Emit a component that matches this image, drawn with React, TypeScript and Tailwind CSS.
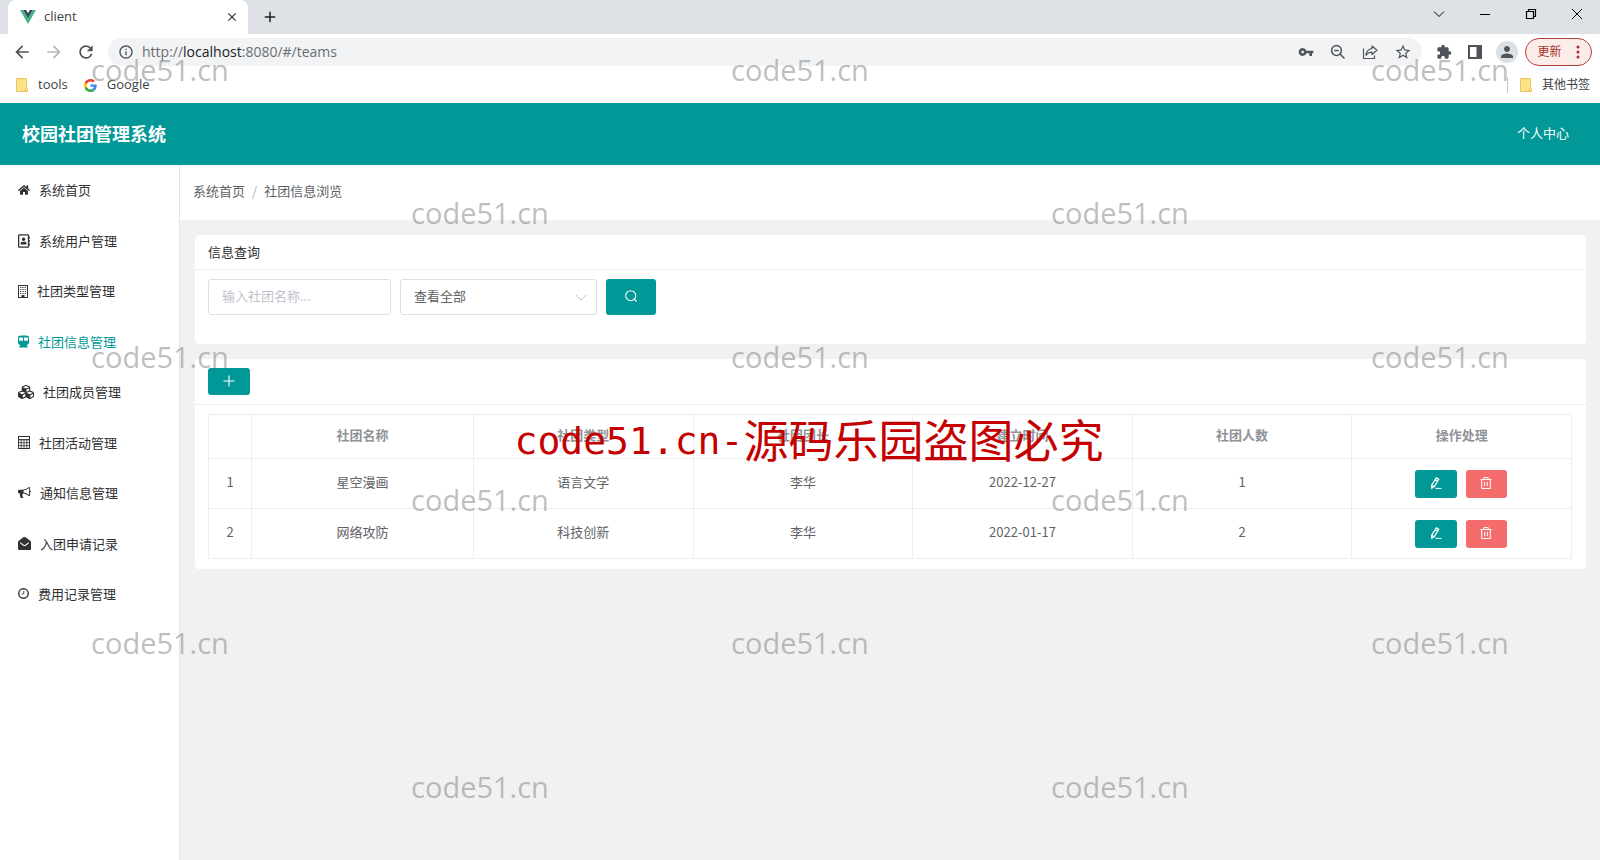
import React from "react";
import { FaHome, FaRegAddressBook, FaCubes } from "react-icons/fa";
import { MdOutlineInfo, MdVpnKey, MdStarOutline, MdExtension, MdPerson, MdRefresh, MdArrowBack, MdArrowForward, MdAdd, MdClose } from "react-icons/md";

type IconProps = { className?: string };

const VueLogo = () => (
  <svg viewBox="0 0 16 14" className="h-3.5 w-4" aria-hidden="true">
    <path d="M0 0h3.2L8 8.3 12.8 0H16L8 14z" fill="#41b883" />
    <path d="M3.2 0h3L8 3.2 9.8 0h3L8 8.3z" fill="#35495e" />
  </svg>
);

const GoogleLogo = () => (
  <svg viewBox="0 0 48 48" className="size-[13px]" aria-hidden="true">
    <path fill="#EA4335" d="M24 9.5c3.5 0 6.700 1.200 9.200 3.600l6.900-6.900C35.900 2.400 30.500 0 24 0 14.600 0 6.500 5.400 2.600 13.200l8 6.200C12.400 13.700 17.700 9.500 24 9.500z" />
    <path fill="#4285F4" d="M47 24.500c0-1.600-.2-3.100-.4-4.500H24v9h12.900c-.6 3-2.300 5.500-4.800 7.200l7.700 6C44.400 38 47 32.100 47 24.500z" />
    <path fill="#FBBC05" d="M10.500 28.600c-.5-1.500-.8-3-.8-4.600s.3-3.100.8-4.600l-8-6.200C.9 16.500 0 20.100 0 24s.9 7.500 2.600 10.800z" />
    <path fill="#34A853" d="M24 48c6.500 0 11.900-2.100 15.900-5.800l-7.700-6c-2.200 1.500-4.900 2.300-8.200 2.300-6.300 0-11.600-4.200-13.500-9.900l-8 6.200C6.500 42.600 14.600 48 24 48z" />
  </svg>
);

const FolderIcon = () => (
  <svg viewBox="0 0 12 14" className="h-3.5 w-3" aria-hidden="true">
    <path d="M.5.500h10v9l1 1v3H.5z" fill="#fde18b" stroke="#e8c659" />
    <path d="M9.500 13.500v-3l1-1" fill="none" stroke="#e8c659" />
  </svg>
);

const BuildingIcon = ({ className }: IconProps) => (
  <svg viewBox="0 0 10 13" className={className} aria-hidden="true">
    <rect x=".5" y=".5" width="9" height="12" fill="none" stroke="currentColor" />
    <path d="M2 2.500h6M2 4.500h6M2 6.500h6M2 8.500h6" stroke="currentColor" strokeWidth=".9" strokeDasharray="1 .67" />
    <path d="M3.500 10h3v3h-3z" fill="currentColor" />
  </svg>
);

const TrainIcon = ({ className }: IconProps) => (
  <svg viewBox="0 0 12 13" className={className} fill="currentColor" aria-hidden="true">
    <path fillRule="evenodd" d="M3 0h6Q12 0 12 2.300v5.900Q12 10 9.500 10.200L11 13H1l1.500-2.800Q0 10 0 8.200V2.300Q0 0 3 0zM1.200 2.200v3.600h4.200V2.200zM6.600 2.200v3.600h4.200V2.200z" />
  </svg>
);

const CalculatorIcon = ({ className }: IconProps) => (
  <svg viewBox="0 0 12 13" className={className} fill="none" stroke="currentColor" aria-hidden="true">
    <rect x=".5" y=".5" width="11" height="12" />
    <path d="M1 3.700h10" strokeWidth="1.200" />
    <path d="M1 6.700h10M1 9.700h10M3.200 4v8.500M6 4v8.500M8.800 4v8.500" strokeWidth=".8" />
  </svg>
);

const BullhornIcon = ({ className }: IconProps) => (
  <svg viewBox="0 0 1792 1792" className={className} fill="currentColor" aria-hidden="true">
    <path d="M1664 640q53 0 90.500 37.500t37.500 90.500-37.500 90.500-90.500 37.500v384q0 52-38 90t-90 38q-417-347-812-380-58 19-91 66t-31 100.500 40 92.500q-20 33-23 65.500t6 58 33.500 55 48 50 61.500 50.500q-29 58-111.500 83t-168.500 11.500-132-55.500q-7-23-29.500-87.500t-32-94.500-23-89-15-101 3.500-98.500 22-110.500h-122q-66 0-113-47t-47-113v-192q0-66 47-113t113-47h480q435 0 896-384 52 0 90 38t38 90v384zm-128 604v-954q-394 302-768 343v270q377 42 768 341z" />
  </svg>
);

const EnvelopeOpenIcon = ({ className }: IconProps) => (
  <svg viewBox="0 0 13 13" className={className} aria-hidden="true">
    <path d="M0 4.600Q3 2 5 .6q1.500-1 3 0Q10 2 13 4.600V12q0 1-1 1H1q-1 0-1-1z" fill="currentColor" />
    <path d="M2.300 5.600Q4 7.200 5.500 8.200q1 .6 2 0Q9 7.200 10.700 5.600" fill="none" stroke="#fff" strokeWidth="1.100" />
  </svg>
);

const ClockIcon = ({ className }: IconProps) => (
  <svg viewBox="0 0 12 12" className={className} fill="none" stroke="currentColor" aria-hidden="true">
    <circle cx="6" cy="6" r="5.200" strokeWidth="1.500" />
    <path d="M6.300 3.200v3.200H4" strokeWidth=".9" />
  </svg>
);

const EditIcon = () => (
  <svg viewBox="0 0 12 12" className="size-3" fill="none" stroke="currentColor" aria-hidden="true">
    <path d="M6.300.900l2.400 1.400-4.300 7.200-2.600 1.600-.1-3zM5.300 2.700l2.400 1.400M1.700 8.200l2.500 1.500" strokeWidth="1.300" />
    <path d="M5.500 11.400h6" />
  </svg>
);

const TrashIcon = () => (
  <svg viewBox="0 0 12 12" className="size-3" fill="none" stroke="currentColor" aria-hidden="true">
    <path d="M.5 2.500h11M3.800 2.500V.6h4.400v1.900M1.700 2.500v9h8.600v-9M4.700 4.800v4.400M7.300 4.800v4.400" />
  </svg>
);

const ShareIcon = () => (
  <svg viewBox="0 0 16 16" className="size-4" fill="none" stroke="currentColor" strokeWidth="1.200" aria-hidden="true">
    <path d="M1.500 4.500v10h11v-3" />
    <path d="M10 2l5 4.300-5 4.200V8.200C7 8.200 5.300 9.300 4 11.500c.3-4 2.600-6.600 6-7z" strokeLinejoin="round" />
  </svg>
);

const ZoomOutIcon = () => (
  <svg viewBox="0 0 16 16" className="size-4" fill="none" stroke="currentColor" strokeWidth="1.500" aria-hidden="true">
    <circle cx="6.500" cy="6.500" r="4.900" />
    <path d="M10 10l4.500 4.500M4.300 6.500h4.400" />
  </svg>
);

const menu = [
  { label: "系统首页", icon: <FaHome className="h-3 w-3" /> },
  { label: "系统用户管理", icon: <FaRegAddressBook className="h-3.5 w-3" /> },
  { label: "社团类型管理", icon: <BuildingIcon className="h-[13px] w-2.5" /> },
  { label: "社团信息管理", icon: <TrainIcon className="h-[13px] w-[11px]" />, active: true },
  { label: "社团成员管理", icon: <FaCubes className="h-4 w-4" /> },
  { label: "社团活动管理", icon: <CalculatorIcon className="h-[13px] w-3" /> },
  { label: "通知信息管理", icon: <BullhornIcon className="size-[13px]" /> },
  { label: "入团申请记录", icon: <EnvelopeOpenIcon className="size-[13px]" /> },
  { label: "费用记录管理", icon: <ClockIcon className="size-[11px]" /> },
];

const teams = [
  { id: 1, name: "星空漫画", type: "语言文学", leader: "李华", date: "2022-12-27", count: 1 },
  { id: 2, name: "网络攻防", type: "科技创新", leader: "李华", date: "2022-01-17", count: 2 },
];

const headings = ["", "社团名称", "社团类型", "社团团长", "建立时间", "社团人数", "操作处理"];

function Browser() {
  return (
    <div className="font-['Open_Sans','Noto_Sans_CJK_SC',sans-serif] text-[13px] text-[#3c4043]">
      <div className="flex h-[34px] items-stretch bg-[#dee1e6] pl-2">
        <div className="flex w-60 items-center rounded-t-lg bg-white pr-[9px] pl-3">
          <VueLogo />
          <span className="ml-2 flex-1">client</span>
          <button aria-label="关闭标签页" className="text-[#333]"><MdClose className="size-3.5" /></button>
        </div>
        <button aria-label="新标签页" className="ml-[13px] text-[#222]"><MdAdd className="size-[18px]" /></button>
        <div className="ml-auto flex items-start pt-2 pr-[17px] text-black">
          <div className="flex gap-[34px]">
            <button aria-label="搜索标签页">
              <svg viewBox="0 0 12 12" className="size-3" fill="none" stroke="currentColor"><path d="M1 3.500l5 5 5-5" /></svg>
            </button>
            <button aria-label="最小化">
              <svg viewBox="0 0 12 12" className="size-3" fill="none" stroke="currentColor"><path d="M1 6.500h10" /></svg>
            </button>
            <button aria-label="还原">
              <svg viewBox="0 0 12 12" className="size-3" fill="none" stroke="currentColor" strokeWidth="1.200"><path d="M1.500 3.500h7v7h-7zM3.500 3.500v-2h7v7h-2" /></svg>
            </button>
            <button aria-label="关闭">
              <svg viewBox="0 0 12 12" className="size-3" fill="none" stroke="currentColor"><path d="M1 1l10 10M11 1L1 11" /></svg>
            </button>
          </div>
        </div>
      </div>

      <div className="flex h-9 items-center bg-white pr-2 pl-3 text-[#50545a]">
        <button aria-label="后退"><MdArrowBack className="size-5" /></button>
        <button aria-label="前进" className="ml-3 text-[#b4b6b9]"><MdArrowForward className="size-5" /></button>
        <button aria-label="刷新" className="ml-3"><MdRefresh className="size-5" /></button>
        <div className="ml-3 flex h-7 flex-1 items-center rounded-full bg-[#f1f3f4] pr-2.5 pl-2.5">
          <MdOutlineInfo className="size-4" />
          <div role="textbox" aria-label="地址" contentEditable suppressContentEditableWarning className="ml-2 flex-1 text-sm text-[#6a6e73] outline-none">
            http://<span className="text-[#202124]">localhost</span>:8080/#/teams
          </div>
          <div className="flex items-center gap-4">
            <MdVpnKey className="size-4" />
            <ZoomOutIcon />
            <ShareIcon />
            <MdStarOutline className="size-[18px]" />
          </div>
        </div>
        <div className="ml-3.5 flex items-center">
          <MdExtension className="size-4" />
          <svg viewBox="0 0 14 14" className="ml-4 size-3.5" aria-hidden="true">
            <path d="M1 1h12v12H1z" fill="none" stroke="currentColor" strokeWidth="2" />
            <path d="M8.500 1H13v12H8.500z" fill="currentColor" />
          </svg>
          <span className="ml-3.5 flex size-[22px] items-center justify-center rounded-full bg-[#dbdfe6]">
            <MdPerson className="size-[18px]" />
          </span>
          <button className="ml-[7px] flex h-7 w-[67px] items-center justify-center gap-3.5 rounded-full border border-[#b3413a] bg-[#fbebe9] text-xs text-[#a8322a]">
            更新
            <svg viewBox="0 0 4 14" className="h-3.5 w-1" fill="currentColor" aria-hidden="true">
              <circle cx="2" cy="2" r="1.500" /><circle cx="2" cy="7" r="1.500" /><circle cx="2" cy="12" r="1.500" />
            </svg>
          </button>
        </div>
      </div>

      <div className="flex h-[33px] items-center bg-white pr-2.5 pb-[3px] pl-4">
        <a href="#/tools" className="flex items-center gap-2.5"><FolderIcon />tools</a>
        <a href="#/google" className="ml-4 flex items-center gap-2.5"><GoogleLogo />Google</a>
        <a href="#/bookmarks" className="ml-auto flex items-center gap-2.5 border-l border-[#c4c7cb] pl-3 text-xs"><FolderIcon />其他书签</a>
      </div>
    </div>
  );
}

function Sidebar() {
  return (
    <aside className="w-[180px] shrink-0 border-r border-[#e6e6e6] bg-white">
      <nav className="grid h-[454px] auto-rows-fr text-[#303133]">
        {menu.map((m) => (
          <a key={m.label} href="#/" className={m.active ? "flex items-center gap-[9px] pl-[18px] text-[#029898]" : "flex items-center gap-[9px] pl-[18px]"}>
            {m.icon}
            <span>{m.label}</span>
          </a>
        ))}
      </nav>
    </aside>
  );
}

function Search() {
  return (
    <section className="rounded-sm bg-white pb-[29px]">
      <h2 className="flex h-[35px] items-center border-b border-[#ebeef5] px-[13px] text-[#303133]">信息查询</h2>
      <form className="flex gap-[9px] px-[13px] pt-[9px]" onSubmit={(e) => e.preventDefault()}>
        <input aria-label="社团名称" placeholder="输入社团名称..." className="h-9 w-[183px] rounded-[3px] border border-[#dcdfe6] px-[13px] pb-[3px] outline-none placeholder:text-[#bfc3cc]" />
        <div className="relative">
          <select aria-label="社团类型" className="h-9 w-[197px] appearance-none rounded-[3px] border border-[#dcdfe6] bg-white px-[13px] pb-[3px] text-[#606266] outline-none">
            <option>查看全部</option>
          </select>
          <svg viewBox="0 0 12 12" className="pointer-events-none absolute top-3 right-2.5 size-3 text-[#c0c4cc]" fill="none" stroke="currentColor" aria-hidden="true">
            <path d="M1 4l5 5 5-5" />
          </svg>
        </div>
        <button aria-label="搜索" className="flex h-9 w-[50px] items-center justify-center rounded-[3px] bg-[#029898] pb-0.5 text-white">
          <svg viewBox="0 0 12 12" className="size-3" fill="none" stroke="currentColor" strokeWidth="1.100" aria-hidden="true">
            <circle cx="5.700" cy="5.700" r="5" /><path d="M9.200 9.200l2.300 2.300" />
          </svg>
        </button>
      </form>
    </section>
  );
}

const cell = "border border-[#ebeef5] pb-[3px]";

function TeamTable() {
  return (
    <section className="mt-[15px] rounded-sm bg-white">
      <div className="border-b border-[#ebeef5] px-[13px] py-[9px]">
        <button aria-label="新增社团" className="flex h-[27px] w-[42px] items-center justify-center rounded-[3px] bg-[#029898] pb-0.5 text-white">
          <svg viewBox="0 0 12 12" className="size-3" stroke="currentColor" strokeWidth="1.100" aria-hidden="true"><path d="M6 .5v11M.5 6h11" /></svg>
        </button>
      </div>
      <div className="pt-[9px] pr-3.5 pb-2.5 pl-[13px]">
        <table className="w-full table-fixed border-collapse text-center text-[#606266]">
          <colgroup>
            <col className="w-[43px]" />
            <col className="w-[222px]" />
            <col span={5} />
          </colgroup>
          <thead>
            <tr className="h-11 text-[#909399]">
              {headings.map((h) => (
                <th key={h} className="border border-[#ebeef5] pb-1 font-bold">{h}</th>
              ))}
            </tr>
          </thead>
          <tbody>
            {teams.map((t) => (
              <tr key={t.id} className="h-[50px]">
                <td className={cell}>{t.id}</td>
                <td className={cell}>{t.name}</td>
                <td className={cell}>{t.type}</td>
                <td className={cell}>{t.leader}</td>
                <td className={cell}>{t.date}</td>
                <td className={cell}>{t.count}</td>
                <td className="border border-[#ebeef5]">
                  <div className="flex justify-center gap-[9px] pr-0.5">
                    <button aria-label="编辑" className="flex h-7 w-[42px] items-center justify-center rounded-[3px] bg-[#029898] pb-0.5 text-white"><EditIcon /></button>
                    <button aria-label="删除" className="flex h-7 w-[41px] items-center justify-center rounded-[3px] bg-[#f56c6c] pb-0.5 text-white"><TrashIcon /></button>
                  </div>
                </td>
              </tr>
            ))}
          </tbody>
        </table>
      </div>
    </section>
  );
}

function Watermarks() {
  return (
    <div className="pointer-events-none absolute inset-0 overflow-hidden" aria-hidden="true">
      <div className="grid h-full grid-cols-5 grid-rows-6 font-['Open_Sans',sans-serif] text-[29px] text-[#808080]/50">
        {Array.from({ length: 30 }, (_, i) => (
          <span key={i} className="flex items-center justify-center pb-1">{i % 2 === 0 ? "code51.cn" : ""}</span>
        ))}
      </div>
      <div className="absolute inset-0 flex items-center justify-center pt-[18px] pl-[18px]">
        <div className="flex items-center whitespace-nowrap text-[#c40000]">
          <span className="pt-1 font-['DejaVu_Sans_Mono',monospace] text-[38px]">code51.cn-</span>
          <span className="font-['Noto_Sans_CJK_SC',sans-serif] text-[45px]">源码乐园盗图必究</span>
        </div>
      </div>
    </div>
  );
}

export default function App() {
  return (
    <div className="relative flex min-h-screen flex-col bg-[#f1f1f1] font-['Noto_Sans_CJK_SC',sans-serif] text-[13px]">
      <Browser />
      <header className="flex h-[62px] items-center justify-between bg-[#029898] pr-[31px] pb-[3px] pl-[22px] text-white">
        <h1 className="text-lg font-bold">校园社团管理系统</h1>
        <a href="#/me">个人中心</a>
      </header>
      <div className="flex flex-1">
        <Sidebar />
        <main className="min-w-0 flex-1">
          <nav className="flex h-[55px] items-center bg-white px-[13px] pb-[3px] text-[#606266]">
            <a href="#/">系统首页</a>
            <span className="mx-[7px] text-[#b0b4bc]">/</span>
            <span>社团信息浏览</span>
          </nav>
          <div className="py-[15px] pr-3.5 pl-[15px]">
            <Search />
            <TeamTable />
          </div>
        </main>
      </div>
      <Watermarks />
    </div>
  );
}
